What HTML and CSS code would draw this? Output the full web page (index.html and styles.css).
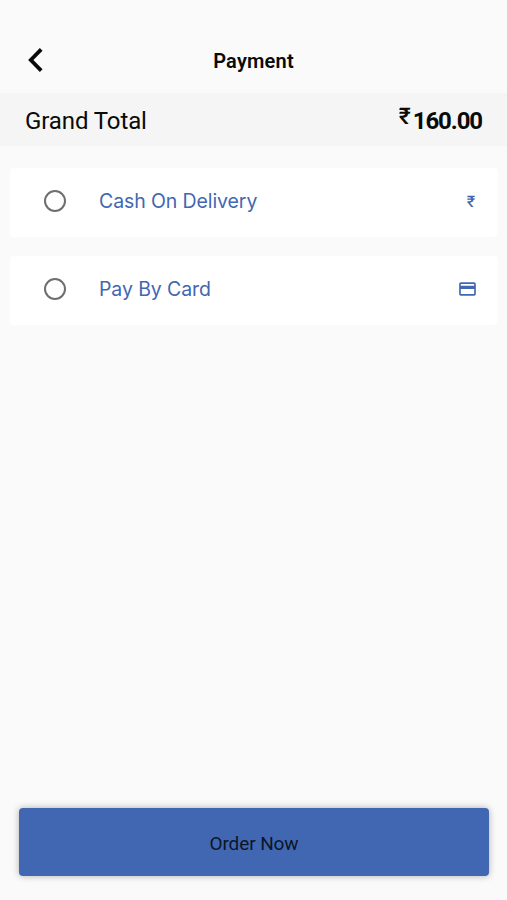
FILE: index.html
```html
<!DOCTYPE html>
<html lang="en">
<head>
    <meta charset="UTF-8">
    <meta name="viewport" content="width=device-width, initial-scale=1.0">
    <title>Payment</title>
    <link rel="stylesheet" href="styles.css">
</head>
<body>

<div class="screen">
    <header class="topbar">
        <button type="button" class="back" aria-label="Back">
            <svg width="18" height="26" viewBox="0 0 18 26"><path d="M15.2 2.4 L4.8 13 L15.2 23.6" fill="none" stroke="#0a0a0a" stroke-width="3.8"/></svg>
        </button>
        <h1>Payment</h1>
    </header>

    <div class="total">
        <span class="total-label">Grand Total</span>
        <span class="total-price"><span class="currency">₹</span><span class="amount">160.00</span></span>
    </div>

    <form class="methods">
        <label class="method">
            <input type="radio" name="method" value="cash">
            <span class="method-name">Cash On Delivery</span>
            <span class="rupee">₹</span>
        </label>
        <label class="method">
            <input type="radio" name="method" value="card">
            <span class="method-name">Pay By Card</span>
            <svg class="card-icon" width="21" height="20" viewBox="0 0 24 24"><path fill="#4267b2" d="M20 4H4c-1.11 0-1.99.89-1.99 2L2 18c0 1.11.89 2 2 2h16c1.11 0 2-.89 2-2V6c0-1.11-.89-2-2-2zm0 14H4v-6h16v6zm0-10H4V6h16v2z"/></svg>
        </label>
    </form>

    <button type="button" class="order">Order Now</button>
</div>

</body>
</html>
```
FILE: styles.css
```css
* {
    box-sizing: border-box;
}
body {
    margin: 0;
    background-color: #fafafa;
    font-family: Roboto, sans-serif;
    color: #0a0a0a;
}
.screen {
    display: flex;
    flex-direction: column;
    height: 900px;
    padding-bottom: 24px;
}
.topbar {
    display: grid;
    grid-template-columns: 60px 1fr 60px;
    align-items: center;
    height: 93px;
    padding-top: 28px;
}
.back {
    display: flex;
    padding: 0 0 2px 26px;
    border: none;
    background: none;
}
h1 {
    margin: 0;
    font-size: 20px;
    font-weight: 600;
    line-height: 24px;
    letter-spacing: 0.2px;
    text-align: center;
}
.total {
    display: flex;
    justify-content: space-between;
    align-items: center;
    height: 53px;
    padding: 2px 25px 0;
    background-color: #f5f5f5;
}
.total-label {
    font-size: 24px;
    letter-spacing: -0.1px;
}
.total-price {
    display: flex;
    align-items: flex-start;
}
.currency {
    font-size: 23px;
    font-weight: 500;
    line-height: 20px;
    margin-right: 2px;
}
.amount {
    font-size: 24px;
    font-weight: 700;
    line-height: 28px;
    letter-spacing: -1.1px;
}
.methods {
    display: flex;
    flex-direction: column;
    gap: 19px;
    padding: 22px 9px 0 10px;
}
.method {
    display: flex;
    align-items: center;
    height: 69px;
    padding: 0 20px 3px 34px;
    border-radius: 4px;
    background-color: #fff;
    color: #4267b2;
}
.method input {
    appearance: none;
    width: 22px;
    height: 22px;
    margin: 0 33px 0 0;
    border: 2.4px solid #6f6f6f;
    border-radius: 50%;
}
.method-name {
    flex: 1;
    font-family: Inter, sans-serif;
    font-size: 19.5px;
    letter-spacing: -0.1px;
}
.rupee {
    margin-right: 3px;
    font-size: 16px;
    font-weight: 500;
}
.order {
    height: 68px;
    margin: auto 18px 0 19px;
    padding: 2px 0 0;
    border: none;
    border-radius: 4px;
    background-color: #4267b2;
    box-shadow: 0 0 7px rgba(0, 0, 0, 0.3);
    color: #0b1626;
    font-family: Roboto, sans-serif;
    font-size: 19px;
    letter-spacing: -0.1px;
}
```
